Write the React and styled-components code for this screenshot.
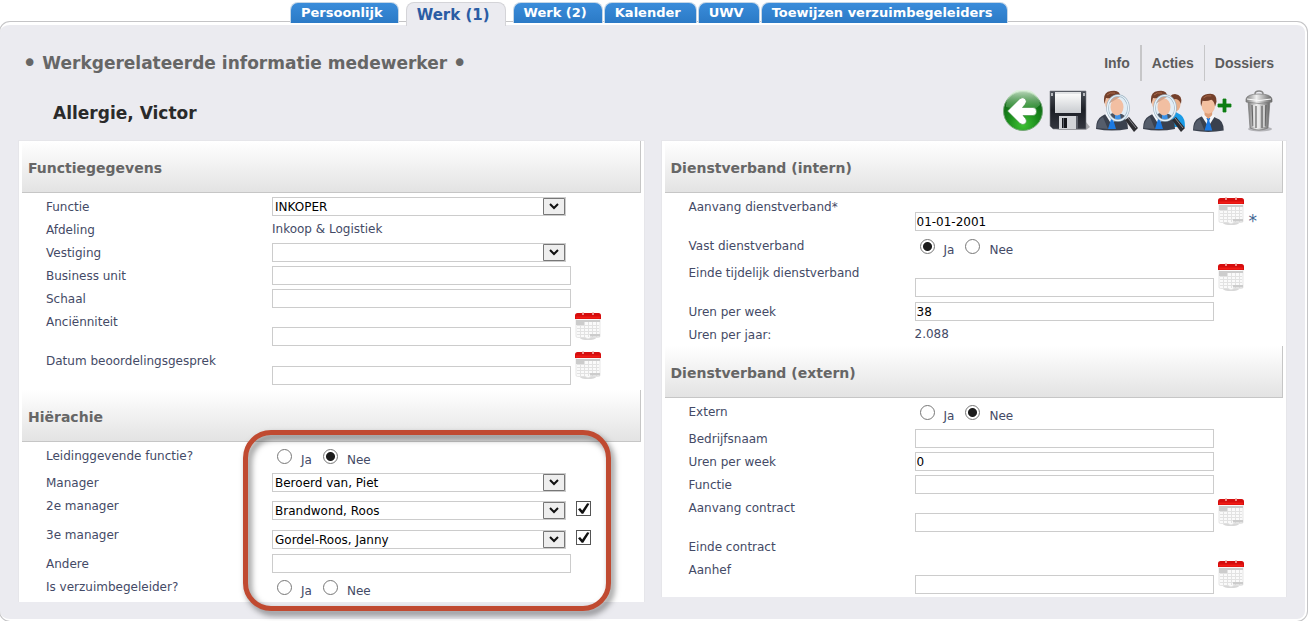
import React from 'react';
import styled, { createGlobalStyle, css } from 'styled-components';

const GlobalStyle = createGlobalStyle`
    * {
        box-sizing: border-box;
    }
    body {
        margin: 0;
        background: #fff;
        color: #444a66;
        font-family: "DejaVu Sans", Verdana, sans-serif;
        font-size: 12px;
    }
    input, select, button {
        font-family: inherit;
        font-size: inherit;
    }
`;

const Page = styled.div`
    padding: 2px 5px 0 0;
`;

const Tabs = styled.nav`
    display: flex;
    align-items: flex-start;
    gap: 1px;
    padding-left: 290px;
`;

const Tab = styled.a`
    height: 21px;
    padding: 0 15px 0 10px;
    border: 1px solid #c5d6e6;
    border-bottom: 0;
    border-radius: 8px 8px 0 0;
    background: linear-gradient(#3a8cda, #2b7ac6);
    color: #fff;
    font-size: 13px;
    font-weight: bold;
    line-height: 20px;
    text-decoration: none;
    white-space: nowrap;

    ${({ $active }) => $active && css`
        position: relative;
        z-index: 1;
        height: 24px;
        margin: 0 6px -3px;
        border-color: #d4d4d8;
        background: #ebebf0;
        color: #2a5ca4;
        font-size: 15px;
        line-height: 25px;
    `}
`;

const Content = styled.main`
    margin-top: -1px;
    padding: 20px 18px 17px;
    border: solid #fff;
    border-width: 3px 2px 2px 0;
    border-radius: 10px;
    background: #ebebf0;
    box-shadow: 0 0 0 1px #c4c4c6;
`;

const TopRow = styled.div`
    display: flex;
    justify-content: space-between;
    align-items: center;
    padding: 0 3px 0 4px;
`;

const PageTitle = styled.h1`
    display: flex;
    align-items: center;
    gap: 5px;
    margin: 0;
    color: #666;
    font-size: 17px;
    line-height: 36px;
`;

const Bullet = styled.span`
    font-size: 26px;
    font-weight: normal;
`;

const Menu = styled.nav`
    display: flex;
`;

const MenuLink = styled.a`
    padding: 0 10px;
    border-left: 1px solid #c6c6c8;
    color: #5c5c5c;
    font: bold 14px/36px "Liberation Sans", Arial, sans-serif;
    text-decoration: none;

    &:first-child {
        border-left: 0;
    }

    &:nth-child(2) {
        border-left-width: 2px;
    }
`;

const NameRow = styled.div`
    display: flex;
    justify-content: space-between;
    align-items: flex-start;
    margin: 9px 0 4px;
    padding: 0 8px 0 35px;
`;

const PersonName = styled.h2`
    margin: 0;
    color: #2a2a2a;
    font-size: 17px;
    line-height: 46px;
`;

const Toolbar = styled.div`
    display: flex;
    gap: 5px;
`;

const IconButton = styled.button`
    width: 42px;
    height: 42px;
    padding: 0;
    border: 0;
    background: none;
    cursor: pointer;

    svg {
        display: block;
    }
`;

const Columns = styled.div`
    display: grid;
    grid-template-columns: 1fr 1fr;
    align-items: start;
    gap: 16px;
`;

const Panel = styled.div`
    padding: 0 3px;
    border: 1px solid #e6e6ea;
    border-width: 1px 1px 0;
    background: #fff;
`;

const SectionTitle = styled.h3`
    margin: 0;
    padding: 3px 6px 0;
    border: solid #c6c6c6;
    border-width: 0 1px 1px 0;
    background: linear-gradient(#fff, #e3e3e3);
    color: #666;
    font-size: 14px;
    line-height: 48px;
`;

const SectionBody = styled.div`
    position: relative;
    padding-top: 2px;
    padding-bottom: ${({ $bottom }) => $bottom || 0}px;
`;

const rowHeights = {
    plain: 23,
    date: 39,
    radio: 27,
    check: 29,
};

const Row = styled.div`
    display: grid;
    grid-template-columns: 226px 1fr;
    height: ${({ $kind }) => rowHeights[$kind]}px;
    padding-left: 24px;
    line-height: 25px;
`;

const Control = styled.div`
    display: flex;
    align-items: ${({ $kind }) => ($kind === 'date' ? 'flex-end' : 'flex-start')};
    padding-top: ${({ $kind }) => ($kind === 'check' ? 7 : 2)}px;
    padding-bottom: ${({ $kind }) => ($kind === 'date' ? 3 : 0)}px;
`;

const Value = styled.span`
    line-height: 19px;
`;

const TextInput = styled.input`
    width: 299px;
    height: 19px;
    padding: 0 1px;
    border: 1px solid #ccc;
    background: #fff;
    color: #000;
`;

const SelectBox = styled.div`
    position: relative;
    width: 294px;
    height: 19px;

    svg {
        position: absolute;
        top: 1px;
        right: 1px;
        pointer-events: none;
    }
`;

const SelectInput = styled.select`
    display: block;
    width: 100%;
    height: 100%;
    padding: 0 24px 0 2px;
    border: 1px solid #ccc;
    border-radius: 0;
    appearance: none;
    background: #fff;
    color: #000;
`;

const CheckBox = styled.input`
    width: 15px;
    height: 15px;
    margin: 0 0 0 10px;
    border: 1px solid #555;
    appearance: none;
    background: #fff;

    &:checked::after {
        content: "";
        display: block;
        height: 100%;
        background: #111;
        clip-path: polygon(8% 56%, 24% 46%, 40% 66%, 78% 10%, 96% 14%, 48% 90%, 36% 90%);
    }
`;

const Radios = styled.div`
    display: flex;
    padding: 3px 0 0 5px;
`;

const Radio = styled.input`
    width: 15px;
    height: 15px;
    margin: 0;
    border: 1px solid #777;
    border-radius: 50%;
    appearance: none;
    background: #fff;

    &:checked {
        background: radial-gradient(circle, #1c1c1c 4px, #fff 5px);
    }
`;

const RadioLabel = styled.label`
    padding: 0 11px 0 9px;
    line-height: 22px;
`;

const DateButton = styled.button`
    align-self: flex-start;
    width: 26px;
    height: 28px;
    margin-left: 4px;
    padding: 0;
    border: 0;
    background: none;
    cursor: pointer;

    svg {
        display: block;
    }
`;

const Required = styled.span`
    padding-left: 5px;
    color: #3f6592;
    font-size: 17px;
    line-height: 19px;
`;

// marker drawn over the manager fields
const Highlight = styled.div`
    position: absolute;
    top: -12px;
    bottom: -9px;
    left: 221px;
    width: 368px;
    border: 5px solid #c04a31;
    border-radius: 28px;
    filter: drop-shadow(3px 4px 3px rgba(0, 0, 0, 0.5));
    pointer-events: none;
`;

const CalendarIcon = () => (
    <svg width="26" height="28" viewBox="0 0 26 28">
        <ellipse cx="13" cy="26" rx="8" ry="2" fill="#d8d8d8" />
        <path d="M1 6h24v18q0 1.500-1.500 1.500H16l-3 1.500-3-1.500H2.500Q1 25.500 1 24z" fill="#fafafa" stroke="#dcdcdc" strokeWidth=".7" />
        <path d="M2 13.500h22M2 16.500h22M2 19.500h22M2 22.500h22M5.500 9v16M9.500 9v16M13.500 9v16M17.500 9v16M21.500 9v16" stroke="#e2e2e2" />
        <path d="M1 8h24v2H1zM1 10h8v3H1zM15 22h10v2.500H15z" fill="#ccc" />
        <path d="M2.500 1h21Q26 1 26 3.500V7H0V3.500Q0 1 2.500 1z" fill="#d60d0d" />
        <path d="M1 5.500h24" stroke="#f01c16" strokeWidth="2" />
        <path d="M8 0v3M18 0v3" stroke="#f3b4ae" strokeWidth="1.500" />
    </svg>
);

const BackIcon = () => (
    <svg width="42" height="42" viewBox="0 0 42 42">
        <defs>
            <radialGradient id="back-ball" cx=".5" cy=".85" r=".8">
                <stop offset="0" stopColor="#3fc234" />
                <stop offset=".5" stopColor="#1a8a1c" />
                <stop offset="1" stopColor="#0b5a14" />
            </radialGradient>
            <linearGradient id="back-shine" x2="0" y2="1">
                <stop offset="0" stopColor="#e4f5e2" stopOpacity=".9" />
                <stop offset="1" stopColor="#7cc47c" stopOpacity=".2" />
            </linearGradient>
        </defs>
        <circle cx="21" cy="21" r="19.500" fill="url(#back-ball)" stroke="#76a878" />
        <path d="M4 17A17 17 0 0 1 38 15Q30 23 19 20 10 18 4 17z" fill="url(#back-shine)" />
        <path d="M5.500 21 18 8.500q3-2 5.500.5 2 2.500-.5 5.500l-2.500 3H31q3.500 0 3.500 4t-3.500 4H21l2.500 3q2 2.500 0 5-2.500 2-5.500 0z" fill="#fff" stroke="#3a8a3c" strokeWidth=".6" />
    </svg>
);

const SaveIcon = () => (
    <svg width="42" height="42" viewBox="0 0 42 42">
        <defs>
            <linearGradient id="disk-body" x2="0" y2="1">
                <stop offset="0" stopColor="#4a4f58" />
                <stop offset=".5" stopColor="#1c1f26" />
                <stop offset="1" stopColor="#33363f" />
            </linearGradient>
            <linearGradient id="disk-label" x2="0" y2="1">
                <stop offset="0" stopColor="#fff" />
                <stop offset="1" stopColor="#c9ccd0" />
            </linearGradient>
        </defs>
        <path d="M37 32l4 5-4 3H7z" fill="#a9a9ad" />
        <path d="M1 1h36v38H4l-3-3z" fill="url(#disk-body)" stroke="#7d8088" strokeWidth=".6" />
        <path d="M6 2h26v21H6z" fill="url(#disk-label)" />
        <path d="M6 2h26v2H6z" fill="#e2e4e6" />
        <path d="M10 26h17v13H10z" fill="#d2d4d8" />
        <path d="M13 28h5v10h-5z" fill="#14161b" />
        <path d="M14 28h1v10h-1z" fill="#5c6069" />
        <path d="M27 26h2v13h-2z" fill="#5c6069" />
        <path d="M2 3h2v3H2zM34 3h2v3h-2z" fill="#b5b8bd" />
    </svg>
);

// head and shoulders, shared by the three user icons
const Figure = () => (
    <g>
        <path d="M0 39Q0 29 6 26l9-5 9 5q8 2 8 13-16 3-32 0z" fill="#3a414e" />
        <path d="M1 38Q1 30 7 27l5 12z" fill="#555d6b" />
        <path d="M9 24l7 11 7-11-3-3h-8z" fill="#f4f7fb" />
        <path d="M14 26h4l-1 3 3 10h-8l3-10z" fill="#1c7ae2" />
        <path d="M12 17h8v6l-4 4-4-4z" fill="#dd9e78" />
        <ellipse cx="16" cy="13" rx="7" ry="8.500" fill="#f3c0a0" />
        <path d="M8.500 14Q6 2 15 1q10-2 9.500 8l-1.500 5q-1-6-4-7-5 2-9 1z" fill="#74402b" />
        <path d="M11 5q3-3 8-2" stroke="#a9694a" fill="none" />
    </g>
);

const Magnifier = () => (
    <g>
        <path d="M29 30l4-3 9 11-4 4z" fill="#2d2d31" />
        <path d="M32 28l8 10" stroke="#8b8b92" />
        <ellipse cx="22" cy="18" rx="10.500" ry="12.500" fill="#e2edf5" />
        <path d="M13 25q4-3 9-2 5 1 7 3-4 5-8 4.500-5-.5-8-5.500z" fill="#4a5361" />
        <path d="M19 23h5l1 7h-6z" fill="#3f93e8" />
        <ellipse cx="21" cy="17" rx="6.500" ry="8.500" fill="#f2bfa2" />
        <path d="M14 10q4-5 10-3-5 3-10 6z" fill="#d2a48b" />
        <ellipse cx="22" cy="18" rx="10.500" ry="12.500" fill="none" stroke="#9fb5c4" strokeWidth="2.500" />
        <ellipse cx="22" cy="18" rx="10.500" ry="12.500" fill="none" stroke="#e9f3fa" strokeWidth="1.200" />
    </g>
);

const SearchUserIcon = () => (
    <svg width="42" height="42" viewBox="0 0 42 42">
        <Figure />
        <Magnifier />
    </svg>
);

const SearchUsersIcon = () => (
    <svg width="42" height="42" viewBox="0 0 42 42">
        <path d="M24 37V25l7-4 7 4q4 3 4 12z" fill="#1a9be6" />
        <ellipse cx="32" cy="14" rx="5.500" ry="7.500" fill="#e9b08a" />
        <path d="M26 12q0-8 6-8 8 1 6 10-2-5-6-5z" fill="#74402b" />
        <Figure />
        <Magnifier />
    </svg>
);

const AddUserIcon = () => (
    <svg width="42" height="42" viewBox="0 0 42 42">
        <g transform="translate(3 3) scale(.96)">
            <Figure />
        </g>
        <path d="M28 14h5V9h3v5h5v3h-5v5h-3v-5h-5z" fill="#0d7d12" stroke="#0d7d12" strokeWidth=".8" />
    </svg>
);

const TrashIcon = () => (
    <svg width="42" height="42" viewBox="0 0 42 42">
        <defs>
            <linearGradient id="can">
                <stop offset="0" stopColor="#7c7c7c" />
                <stop offset=".4" stopColor="#f0f0f0" />
                <stop offset="1" stopColor="#666" />
            </linearGradient>
        </defs>
        <ellipse cx="23" cy="39" rx="12" ry="2.500" fill="#b4b4b8" />
        <path d="M11 10h22l-2 28q-9 4-18 0z" fill="url(#can)" stroke="#777" strokeWidth=".7" />
        <path d="M15 15l1 21M19 16v22M25 16v22M29 15l-1 21" stroke="#666" strokeWidth="1.200" />
        <path d="M17 15v22M22 15v23M27 15v22" stroke="#f4f4f4" />
        <path d="M9 9q1-5 13-5t13 5v3q-13 3-26 0z" fill="url(#can)" stroke="#777" strokeWidth=".7" />
        <path d="M10 9q12 3 24 0" stroke="#fafafa" fill="none" />
        <path d="M18 4q0-3 4-3t4 3" stroke="#888" strokeWidth="1.500" fill="none" />
    </svg>
);

const Select = ({ id, value }) => (
    <SelectBox>
        <SelectInput id={id} defaultValue={value}>
            <option>{value}</option>
        </SelectInput>
        <svg width="22" height="17" viewBox="0 0 22 17">
            <path d="M.5.5h21v16H.5z" fill="#eee" stroke="#777" />
            <path d="M7 6l4 4 4-4" stroke="#111" strokeWidth="2" fill="none" />
        </svg>
    </SelectBox>
);

const RadioPair = ({ id, label, value }) => (
    <Radios role="radiogroup" aria-label={label}>
        {['Ja', 'Nee'].map((option) => (
            <React.Fragment key={option}>
                <Radio type="radio" id={`${id}-${option}`} name={id} defaultChecked={value === option} />
                <RadioLabel htmlFor={`${id}-${option}`}>{option}</RadioLabel>
            </React.Fragment>
        ))}
    </Radios>
);

const renderControl = ({ id, type, label, value, required }) => {
    switch (type) {
        case 'select':
            return <Select id={id} value={value} />;
        case 'check':
            return (
                <>
                    <Select id={id} value={value} />
                    <CheckBox type="checkbox" aria-label={`${label} actief`} defaultChecked />
                </>
            );
        case 'radio':
            return <RadioPair id={id} label={label} value={value} />;
        case 'date':
            return (
                <>
                    <TextInput id={id} type="text" defaultValue={value} />
                    <DateButton type="button" aria-label={`Kies datum ${label}`}><CalendarIcon /></DateButton>
                    {required && <Required>*</Required>}
                </>
            );
        case 'text':
            return <TextInput id={id} type="text" defaultValue={value} />;
        default:
            return <Value>{value}</Value>;
    }
};

const Field = ({ field }) => {
    const kind = rowHeights[field.type] ? field.type : 'plain';
    const hasInput = ['select', 'check', 'date', 'text'].includes(field.type);
    return (
        <Row $kind={kind}>
            {hasInput ? <label htmlFor={field.id}>{field.label}</label> : <span>{field.label}</span>}
            <Control $kind={kind}>{renderControl(field)}</Control>
        </Row>
    );
};

const Section = ({ title, fields, bottom, highlighted }) => (
    <section>
        <SectionTitle>{title}</SectionTitle>
        <SectionBody $bottom={bottom}>
            {fields.map((field) => <Field key={field.id} field={field} />)}
            {highlighted && <Highlight />}
        </SectionBody>
    </section>
);

const tabs = ['Persoonlijk', 'Werk (1)', 'Werk (2)', 'Kalender', 'UWV', 'Toewijzen verzuimbegeleiders'];

const actions = [
    { label: 'Terug', Icon: BackIcon },
    { label: 'Opslaan', Icon: SaveIcon },
    { label: 'Zoek medewerker', Icon: SearchUserIcon },
    { label: 'Zoek medewerkers', Icon: SearchUsersIcon },
    { label: 'Nieuwe medewerker', Icon: AddUserIcon },
    { label: 'Verwijderen', Icon: TrashIcon },
];

const functionFields = [
    { id: 'functie', label: 'Functie', type: 'select', value: 'INKOPER' },
    { id: 'afdeling', label: 'Afdeling', value: 'Inkoop & Logistiek' },
    { id: 'vestiging', label: 'Vestiging', type: 'select', value: '' },
    { id: 'unit', label: 'Business unit', type: 'text' },
    { id: 'schaal', label: 'Schaal', type: 'text' },
    { id: 'ancienniteit', label: 'Anciënniteit', type: 'date' },
    { id: 'beoordeling', label: 'Datum beoordelingsgesprek', type: 'date' },
];

const hierarchyFields = [
    { id: 'leidinggevend', label: 'Leidinggevende functie?', type: 'radio', value: 'Nee' },
    { id: 'manager', label: 'Manager', type: 'select', value: 'Beroerd van, Piet' },
    { id: 'manager2', label: '2e manager', type: 'check', value: 'Brandwond, Roos' },
    { id: 'manager3', label: '3e manager', type: 'check', value: 'Gordel-Roos, Janny' },
    { id: 'andere', label: 'Andere', type: 'text' },
    { id: 'begeleider', label: 'Is verzuimbegeleider?', type: 'radio' },
];

const internalFields = [
    { id: 'aanvang', label: 'Aanvang dienstverband*', type: 'date', value: '01-01-2001', required: true },
    { id: 'vast', label: 'Vast dienstverband', type: 'radio', value: 'Ja' },
    { id: 'einde', label: 'Einde tijdelijk dienstverband', type: 'date' },
    { id: 'uren', label: 'Uren per week', type: 'text', value: '38' },
    { id: 'jaar', label: 'Uren per jaar:', value: '2.088' },
];

const externalFields = [
    { id: 'extern', label: 'Extern', type: 'radio', value: 'Nee' },
    { id: 'bedrijf', label: 'Bedrijfsnaam', type: 'text' },
    { id: 'uren-extern', label: 'Uren per week', type: 'text', value: '0' },
    { id: 'functie-extern', label: 'Functie', type: 'text' },
    { id: 'contract', label: 'Aanvang contract', type: 'date' },
    { id: 'contract-einde', label: 'Einde contract' },
    { id: 'aanhef', label: 'Aanhef', type: 'date' },
];

const App = () => (
    <Page>
        <GlobalStyle />
        <Tabs>
            {tabs.map((tab) => <Tab key={tab} href="#" $active={tab === 'Werk (1)'}>{tab}</Tab>)}
        </Tabs>
        <Content>
            <TopRow>
                <PageTitle>
                    <Bullet>•</Bullet>
                    Werkgerelateerde informatie medewerker
                    <Bullet>•</Bullet>
                </PageTitle>
                <Menu>
                    <MenuLink href="#">Info</MenuLink>
                    <MenuLink href="#">Acties</MenuLink>
                    <MenuLink href="#">Dossiers</MenuLink>
                </Menu>
            </TopRow>
            <NameRow>
                <PersonName>Allergie, Victor</PersonName>
                <Toolbar>
                    {actions.map(({ label, Icon }) => (
                        <IconButton key={label} type="button" aria-label={label}><Icon /></IconButton>
                    ))}
                </Toolbar>
            </NameRow>
            <Columns>
                <Panel>
                    <Section title="Functiegegevens" fields={functionFields} bottom={2} />
                    <Section title="Hiërachie" fields={hierarchyFields} highlighted />
                </Panel>
                <Panel>
                    <Section title="Dienstverband (intern)" fields={internalFields} />
                    <Section title="Dienstverband (extern)" fields={externalFields} />
                </Panel>
            </Columns>
        </Content>
    </Page>
);

export default App;
